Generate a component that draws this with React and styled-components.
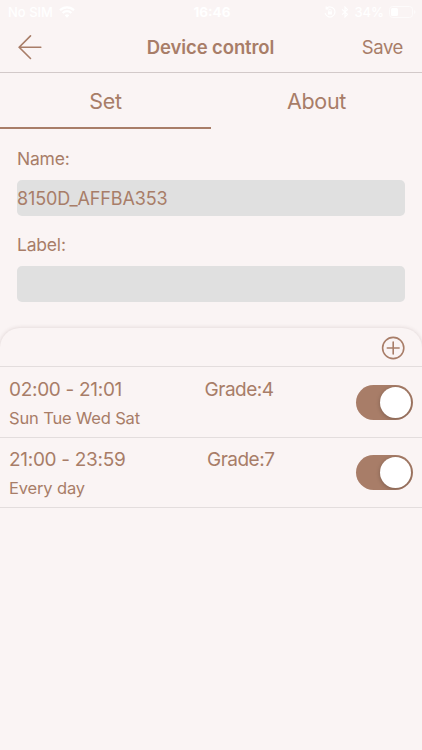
import styled, { createGlobalStyle } from "styled-components";
import { useState } from "react";

const GlobalStyle = createGlobalStyle`
  :root {
    --background: #faf4f4;
    --brown: #a87d68;
    --field: #e0e0e0;
    --line: #e3dddd;
  }

  * {
    box-sizing: border-box;
  }

  body {
    margin: 0;
    background: var(--background);
    color: var(--brown);
    font-family: Inter, "Liberation Sans", sans-serif;
    overflow: hidden;
  }

  button,
  input {
    border: none;
    padding: 0;
    background: none;
    color: inherit;
    font: inherit;
    letter-spacing: inherit;
  }
`;

const Screen = styled.div`
  display: flex;
  flex-direction: column;
  height: 750px;
`;

const StatusBar = styled.div`
  display: grid;
  grid-template-columns: 1fr auto 1fr;
  align-items: center;
  height: 24px;
  padding: 0 6px 0 8px;
  color: #ffffff;
  font-size: 13px;
  font-weight: 500;
  line-height: 24px;
`;

const StatusGroup = styled.div`
  display: flex;
  align-items: center;
  justify-content: ${(props) => (props.$end ? "flex-end" : "flex-start")};
  gap: ${(props) => (props.$end ? "5px" : "6px")};
`;

const Clock = styled.span`
  font-size: 13.5px;
  font-weight: 700;
`;

const Header = styled.header`
  display: grid;
  grid-template-columns: 1fr auto 1fr;
  align-items: center;
  height: 49px;
  padding: 0 19px 2px 18px;
  border-bottom: 1px solid #d2c9c9;
`;

const BackButton = styled.button`
  display: flex;
  justify-self: start;
`;

const Title = styled.h1`
  margin: 0;
  font-size: 18.5px;
  font-weight: 600;
  line-height: 24px;
  letter-spacing: -0.1px;
`;

const SaveButton = styled.button`
  justify-self: end;
  font-size: 18.5px;
  line-height: 24px;
  letter-spacing: -0.4px;
`;

const Tabs = styled.div`
  display: flex;
`;

const Tab = styled.button`
  flex: 1;
  height: 56px;
  padding-top: 2px;
  border-bottom: 2px solid
    ${(props) => (props.$active ? "var(--brown)" : "transparent")};
  font-size: 21.5px;
  letter-spacing: -0.35px;
`;

const Form = styled.div`
  display: flex;
  flex-direction: column;
  gap: 18px;
  padding: 19px 17px 26px;
`;

const Field = styled.label`
  display: flex;
  flex-direction: column;
  gap: 10px;
  font-size: 17.5px;
  line-height: 22px;
  letter-spacing: -0.2px;
`;

const FieldInput = styled.input`
  height: 36px;
  border-radius: 5px;
  background: var(--field);
  font-size: 18px;
  letter-spacing: -0.12px;
`;

const Schedule = styled.section`
  flex: 1;
  border-radius: 20px 20px 0 0;
  background: var(--background);
  box-shadow: 0 0 4px rgba(60, 30, 30, 0.16);
`;

const ScheduleHeader = styled.div`
  display: flex;
  align-items: center;
  justify-content: flex-end;
  height: 39px;
  padding: 2px 17px 0 0;
  border-bottom: 1px solid var(--line);
`;

const AddButton = styled.button`
  display: flex;
`;

const ScheduleRow = styled.div`
  display: flex;
  align-items: center;
  height: ${(props) => props.$height}px;
  padding: 0 9px;
  border-bottom: 1px solid var(--line);
`;

const RowText = styled.div`
  flex: 1;
`;

const RowMain = styled.div`
  display: flex;
  justify-content: space-between;
  font-size: 19px;
  line-height: 30px;
  letter-spacing: -0.3px;

  // keeps the grade halfway between the time and the switch
  &::after {
    content: "";
  }
`;

const Grade = styled.span`
  letter-spacing: -0.5px;
`;

const RowDays = styled.div`
  font-size: 16.5px;
  line-height: 24px;
  letter-spacing: -0.15px;
  margin-top: 1px;
`;

const Switch = styled.button`
  display: flex;
  align-items: center;
  justify-content: ${(props) => (props.$on ? "flex-end" : "flex-start")};
  width: 57px;
  height: 35px;
  padding: 0 2px;
  border-radius: 18px;
  background: ${(props) => (props.$on ? "var(--brown)" : "var(--field)")};
  overflow: hidden;
`;

const Knob = styled.span`
  width: 31px;
  height: 31px;
  border-radius: 50%;
  background: #ffffff;
  box-shadow: 0 1px 4px rgba(0, 0, 0, 0.25);
`;

const WifiIcon = () => (
  <svg width="16" height="12" viewBox="0 0 16 12" fill="none" stroke="#fff">
    <path d="M1 4.2a10 10 0 0 1 14 0" strokeWidth="2.2" />
    <path d="M3.6 7a6.3 6.3 0 0 1 8.8 0" strokeWidth="2.2" />
    <path d="M8 11.8 5.7 9.3a3.3 3.3 0 0 1 4.6 0z" fill="#fff" stroke="none" />
  </svg>
);

const RotationLockIcon = () => (
  <svg width="12" height="12" viewBox="0 0 12 12" fill="none" stroke="#fff">
    <path d="M2.2 2.6a5 5 0 1 1-1.1 4.6M2.2.5v2.4h2.4" strokeWidth="1.1" />
    <rect x="4" y="5.5" width="4" height="3" fill="#fff" stroke="none" />
    <path d="M4.8 5.6V4.4a1.2 1.2 0 0 1 2.4 0v1.2" />
  </svg>
);

const BluetoothIcon = () => (
  <svg width="8" height="12" viewBox="0 0 8 12" fill="none" stroke="#fff">
    <path d="m1 3.3 5.5 5L4 11V1l2.5 2.7L1 8.7" strokeWidth="1.1" />
  </svg>
);

const BatteryIcon = () => (
  <svg width="27" height="12" viewBox="0 0 27 12" fill="none">
    <rect
      x=".5"
      y=".5"
      width="23"
      height="11"
      rx="3"
      stroke="#fff"
      strokeOpacity=".6"
    />
    <rect x="2" y="2" width="7" height="8" rx="1.5" fill="#fff" />
    <path d="M25 4v4q1.5-.6 1.5-2T25 4z" fill="#fff" fillOpacity=".6" />
  </svg>
);

const BackIcon = () => (
  <svg
    width="26"
    height="26"
    viewBox="0 0 26 26"
    fill="none"
    stroke="currentColor"
    strokeWidth="1.6"
    strokeLinecap="round"
  >
    <path d="M22.8 13.2H1.2M12.5 1.9 1.2 13.2l11.3 11.3" />
  </svg>
);

const AddIcon = () => (
  <svg
    width="24"
    height="24"
    viewBox="0 0 24 24"
    fill="none"
    stroke="currentColor"
    strokeWidth="1.6"
    strokeLinecap="round"
  >
    <circle cx="12.2" cy="12" r="10.6" />
    <path d="M6.3 12h11.8M12.2 6.1v11.8" />
  </svg>
);

const ScheduleItem = ({ time, grade, days, height }) => {
  const [on, setOn] = useState(true);

  return (
    <ScheduleRow $height={height}>
      <RowText>
        <RowMain>
          <span>{time}</span>
          <Grade>Grade:{grade}</Grade>
        </RowMain>
        <RowDays>{days}</RowDays>
      </RowText>
      <Switch $on={on} onClick={() => setOn(!on)}>
        <Knob />
      </Switch>
    </ScheduleRow>
  );
};

const App = () => {
  const [tab, setTab] = useState("Set");

  return (
    <Screen>
      <GlobalStyle />
      <StatusBar>
        <StatusGroup>
          <span>No SIM</span>
          <WifiIcon />
        </StatusGroup>
        <Clock>16:46</Clock>
        <StatusGroup $end>
          <RotationLockIcon />
          <BluetoothIcon />
          <span>34%</span>
          <BatteryIcon />
        </StatusGroup>
      </StatusBar>
      <Header>
        <BackButton>
          <BackIcon />
        </BackButton>
        <Title>Device control</Title>
        <SaveButton>Save</SaveButton>
      </Header>
      <Tabs>
        {["Set", "About"].map((name) => (
          <Tab key={name} $active={tab === name} onClick={() => setTab(name)}>
            {name}
          </Tab>
        ))}
      </Tabs>
      <Form>
        <Field>
          Name:
          <FieldInput defaultValue="8150D_AFFBA353" />
        </Field>
        <Field>
          Label:
          <FieldInput />
        </Field>
      </Form>
      <Schedule>
        <ScheduleHeader>
          <AddButton>
            <AddIcon />
          </AddButton>
        </ScheduleHeader>
        <ScheduleItem
          time="02:00 - 21:01"
          grade={4}
          days="Sun Tue Wed Sat"
          height={71}
        />
        <ScheduleItem
          time="21:00 - 23:59"
          grade={7}
          days="Every day"
          height={70}
        />
      </Schedule>
    </Screen>
  );
};

export default App;
